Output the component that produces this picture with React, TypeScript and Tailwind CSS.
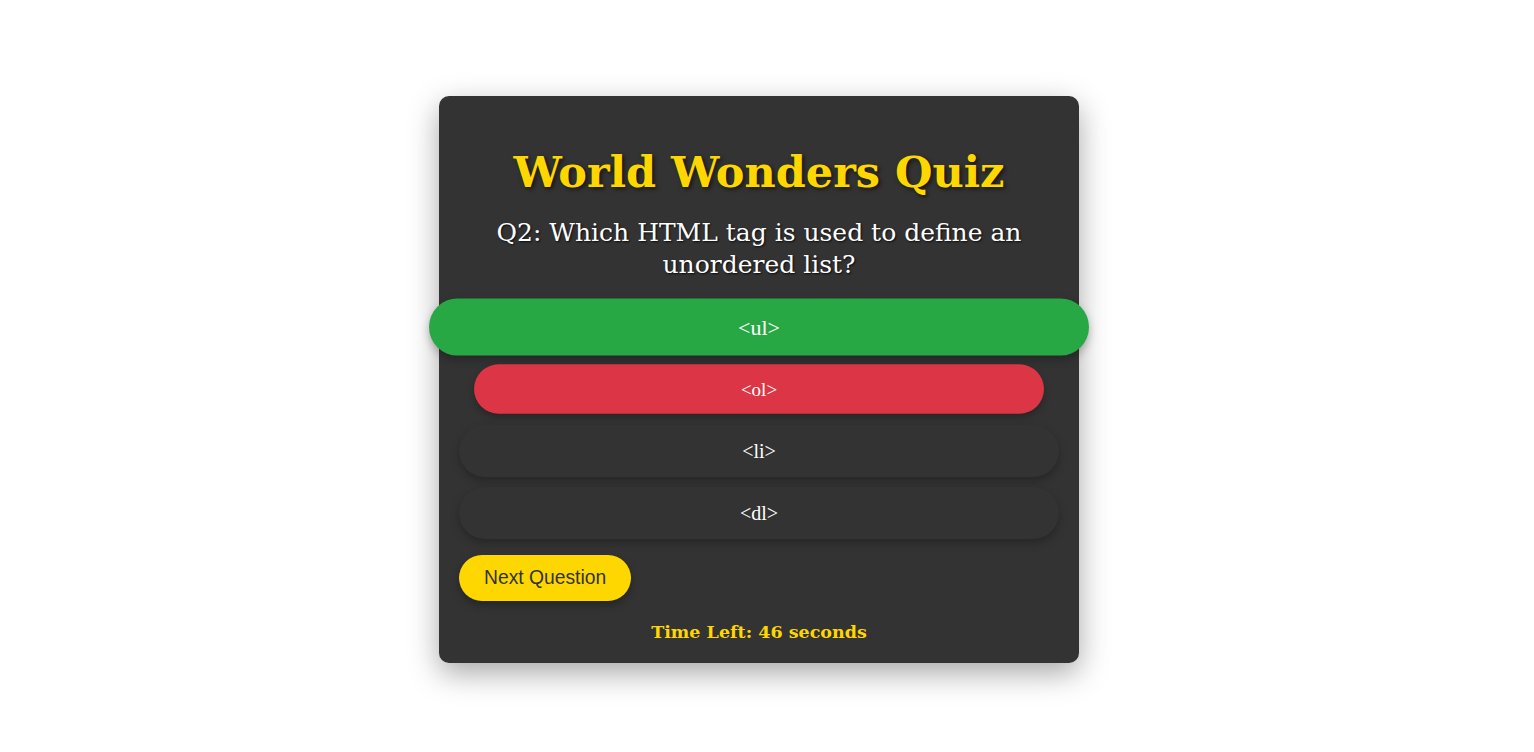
import { useState } from "react";

const OPTIONS = [
  { label: "<ul>", state: "correct" },
  { label: "<ol>", state: "wrong" },
  { label: "<li>", state: "idle" },
  { label: "<dl>", state: "idle" },
];

export default function App() {
  const [seconds] = useState(46);

  return (
    <div className="h-screen w-full overflow-hidden bg-white flex justify-center items-start pt-[96px] pr-[16px]">
      <div className="w-[640px] rounded-[10px] bg-[#333333] px-5 pt-5 pb-[21px] shadow-[0_10px_30px_rgba(0,0,0,0.35)] font-['DejaVu_Serif',serif]">
        <h1 className="mt-[32px] text-center text-[43px] leading-[48px] font-bold text-[#ffd700] [text-shadow:2px_2px_4px_rgba(0,0,0,0.6)]">
          World Wonders Quiz
        </h1>

        <p className="mt-[21px] text-center text-[25px] leading-[32px] text-white [text-shadow:1px_1px_2px_rgba(0,0,0,0.8)]">
          Q2: Which HTML tag is used to define an unordered list?
        </p>

        <div className="mt-[20px] flex flex-col gap-[10px]">
          {OPTIONS.map((opt) => (
            <button
              key={opt.label}
              className={`h-[52px] w-full rounded-full text-[20px] text-white font-['Liberation_Serif',serif] shadow-[0_4px_8px_rgba(0,0,0,0.25)] ${
                opt.state === "correct"
                  ? "bg-[#28a745] scale-110"
                  : opt.state === "wrong"
                  ? "bg-[#dc3545] scale-95"
                  : "bg-[#333333]"
              }`}
            >
              {opt.label}
            </button>
          ))}
        </div>

        <button className="mt-[16px] h-[46px] px-[25px] rounded-full bg-[#ffd700] text-[19.3px] text-[#333333] font-['Liberation_Sans',sans-serif] shadow-[0_4px_8px_rgba(0,0,0,0.3)]">
          Next Question
        </button>

        <p className="mt-[21px] text-center text-[17.5px] leading-[20px] font-bold text-[#ffd700]">
          Time Left: {seconds} seconds
        </p>
      </div>
    </div>
  );
}
